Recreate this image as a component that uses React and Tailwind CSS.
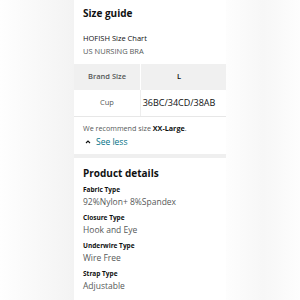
import React from 'react';

const details = [
  { label: 'Fabric Type', value: '92%Nylon+ 8%Spandex' },
  { label: 'Closure Type', value: 'Hook and Eye' },
  { label: 'Underwire Type', value: 'Wire Free' },
  { label: 'Strap Type', value: 'Adjustable' },
];

export default function App() {
  return (
    <div className="flex h-[300px] w-[300px] overflow-hidden bg-white" style={{ fontFamily: '"Open Sans", sans-serif' }}>
      <div className="w-[74px] bg-gradient-to-r from-[#fefefe] to-[#f3f3f3]" />
      <div className="w-[152px] bg-white text-[#0f1111]">
        {/* size guide */}
        <div className="px-[9px] pt-[6px]">
          <h2 className="text-[10px] font-bold leading-[14px]">Size guide</h2>
          <div className="mt-[12px] text-[7.5px] leading-[13px] text-[#0f1111]">HOFISH Size Chart</div>
          <div className="text-[7.5px] leading-[13px] text-[#565959]">US NURSING BRA</div>
        </div>
        <div className="mt-[6px] grid grid-cols-[67px_85px] border-b border-[#e7e7e7]">
          <div className="flex h-[26px] items-center justify-center border-r border-white bg-[#f0f0f0] text-[7.5px] font-semibold text-[#565959]">Brand Size</div>
          <div className="flex h-[26px] items-center justify-center bg-[#f0f0f0] pr-[9px] text-[7.5px] font-semibold">L</div>
          <div className="flex h-[26px] items-center justify-center border-r border-[#eeeeee] text-[7.5px] text-[#565959]">Cup</div>
          <div className="flex h-[26px] items-center justify-center pr-[9px] text-[9px] text-[#0f1111]">36BC/34CD/38AB</div>
        </div>
        <div className="px-[9px] pt-[5px] pb-[6px]">
          <div className="whitespace-nowrap text-[7.2px] leading-[13px] text-[#565959]">
            We recommend size <span className="font-bold text-[#0f1111]">XX-Large</span>.
          </div>
          <div className="flex items-center gap-[4px] leading-[13px]">
            <svg width="8" height="8" viewBox="0 0 8 8" className="ml-[1px]">
              <path d="M2 5 L4 3 L6 5" fill="none" stroke="#0f1111" strokeWidth="1.1" />
            </svg>
            <span className="text-[8.5px] text-[#007185]">See less</span>
          </div>
        </div>
        <div className="h-[4px] bg-[#efefef]" />
        {/* product details */}
        <div className="px-[9px] pt-[8px]">
          <h2 className="text-[10px] font-bold leading-[14px]">Product details</h2>
          {details.map((d) => (
            <div key={d.label} className="mt-[4px]">
              <div className="text-[6.5px] font-bold leading-[12px]">{d.label}</div>
              <div className="text-[8.5px] leading-[12px] text-[#565959]">{d.value}</div>
            </div>
          ))}
        </div>
      </div>
      <div className="flex-1 bg-gradient-to-r from-[#fdfdfd] via-[#f7f7f7] to-[#fdfdfd]" />
    </div>
  );
}
